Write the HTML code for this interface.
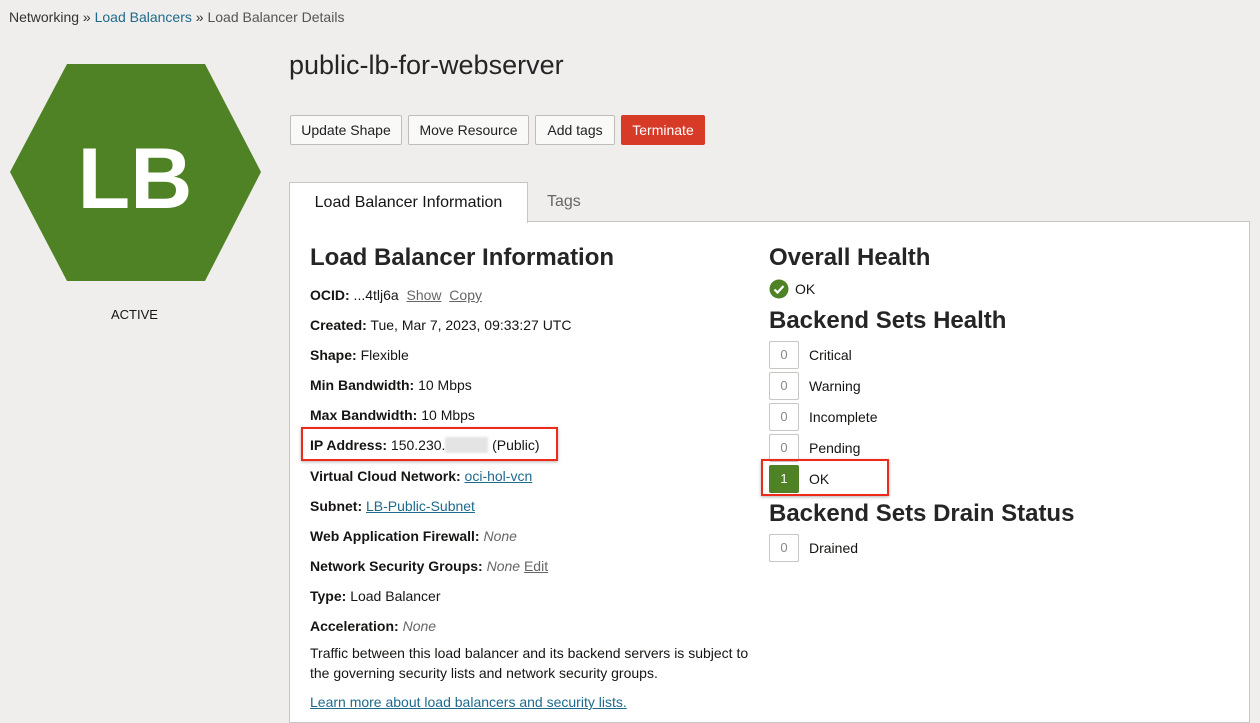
<!DOCTYPE html>
<html><head><meta charset="utf-8"><style>
body{margin:0;width:1260px;height:717px;overflow:hidden;background:#f0eeec;font-family:"Liberation Sans",sans-serif;color:#161513;position:relative}
.a{position:absolute;white-space:nowrap}
.crumb{left:9px;top:9px;font-size:14px;color:#333}
.crumb a{color:#1e6a8d;text-decoration:none}
.crumb .g{color:#555}
h1{position:absolute;left:289px;top:50px;margin:0;font-size:27px;font-weight:normal;color:#252525}
.btn{position:absolute;top:115px;height:28px;line-height:28px;border:1px solid #c0bdb8;background:#f9f9f8;border-radius:2px;font-size:14px;text-align:center;color:#222}
.panel{position:absolute;left:289px;top:221px;width:959px;height:500px;background:#fff;border:1px solid #c8c6c2}
.tab{position:absolute;left:289px;top:182px;width:237px;height:40px;background:#fff;border:1px solid #c8c6c2;border-bottom:none;font-size:16px;line-height:40px;text-align:center;z-index:2}
.tab2{left:547px;top:193px;font-size:16px;color:#666}
.h2{font-size:24px;font-weight:bold;color:#252525}
.r{font-size:14px;left:310px}
.r b{font-weight:bold}
.r i{color:#666}
.lnk{color:#1e6a8d;text-decoration:underline}
.gl{color:#666;text-decoration:underline}
.bx{position:absolute;left:769px;width:28px;height:26px;border:1px solid #c8c6c2;border-radius:2px;text-align:center;line-height:26px;font-size:13px;color:#888;background:#fff}
.lb{left:809px;font-size:14px}
.red{position:absolute;border:2px solid #ee2a1b;box-shadow:0 1px 3px rgba(0,0,0,.3)}
</style></head><body>
<div class="a crumb">Networking » <a>Load Balancers</a> » <span class="g">Load Balancer Details</span></div>
<svg class="a" style="left:0;top:60px" width="270" height="225"><polygon points="10,112 67,4 205,4 261,112 205,221 67,221" fill="#4e8225"/><text x="135" y="148" text-anchor="middle" font-family="Liberation Sans" font-weight="bold" font-size="86" fill="#fff">LB</text></svg>
<div class="a" style="left:111px;top:307px;font-size:13px">ACTIVE</div>
<h1>public-lb-for-webserver</h1>
<div class="btn" style="left:290px;width:110px">Update Shape</div>
<div class="btn" style="left:408px;width:119px">Move Resource</div>
<div class="btn" style="left:535px;width:78px">Add tags</div>
<div class="btn" style="left:621px;width:82px;background:#d73b27;border-color:#d73b27;color:#fff">Terminate</div>
<div class="panel"></div>
<div class="tab">Load Balancer Information</div>
<div class="a tab2">Tags</div>
<div class="a h2" style="left:310px;top:244px">Load Balancer Information</div>
<div class="a r" style="top:287px"><b>OCID:</b> ...4tlj6a &nbsp;<span class="gl">Show</span> &nbsp;<span class="gl">Copy</span></div>
<div class="a r" style="top:317px"><b>Created:</b> Tue, Mar 7, 2023, 09:33:27 UTC</div>
<div class="a r" style="top:347px"><b>Shape:</b> Flexible</div>
<div class="a r" style="top:377px"><b>Min Bandwidth:</b> 10 Mbps</div>
<div class="a r" style="top:407px"><b>Max Bandwidth:</b> 10 Mbps</div>
<div class="a r" style="top:437px"><b>IP Address:</b> 150.230.<span style="color:#ccc;background:#e4e4e4;filter:blur(1px)">&nbsp;&nbsp;&nbsp;&nbsp;&nbsp;&nbsp;&nbsp;&nbsp;&nbsp;&nbsp;&nbsp;</span> (Public)</div>
<div class="a r" style="top:468px"><b>Virtual Cloud Network:</b> <span class="lnk">oci-hol-vcn</span></div>
<div class="a r" style="top:498px"><b>Subnet:</b> <span class="lnk">LB-Public-Subnet</span></div>
<div class="a r" style="top:528px"><b>Web Application Firewall:</b> <i>None</i></div>
<div class="a r" style="top:558px"><b>Network Security Groups:</b> <i>None</i> <span class="gl">Edit</span></div>
<div class="a r" style="top:588px"><b>Type:</b> Load Balancer</div>
<div class="a r" style="top:618px"><b>Acceleration:</b> <i>None</i></div>
<div class="a r" style="top:643px;line-height:20px">Traffic between this load balancer and its backend servers is subject to<br>the governing security lists and network security groups.</div>
<div class="a r" style="top:694px"><span class="lnk">Learn more about load balancers and security lists.</span></div>
<div class="red" style="left:301px;top:427px;width:253px;height:30px"></div>

<div class="a h2" style="left:769px;top:244px">Overall Health</div>
<svg class="a" style="left:769px;top:279px" width="20" height="20"><circle cx="10" cy="10" r="9.5" fill="#4e8225"/><path d="M5.5 10.5l3 3 6-6.5" stroke="#fff" stroke-width="2.2" fill="none"/></svg>
<div class="a" style="left:795px;top:281px;font-size:14px">OK</div>
<div class="a h2" style="left:769px;top:307px">Backend Sets Health</div>
<div class="bx" style="top:341px">0</div><div class="a lb" style="top:347px">Critical</div>
<div class="bx" style="top:372px">0</div><div class="a lb" style="top:378px">Warning</div>
<div class="bx" style="top:403px">0</div><div class="a lb" style="top:409px">Incomplete</div>
<div class="bx" style="top:434px">0</div><div class="a lb" style="top:440px">Pending</div>
<div class="bx" style="top:465px;background:#4e8225;border-color:#4e8225;color:#fff">1</div><div class="a lb" style="top:471px">OK</div>
<div class="red" style="left:761px;top:459px;width:124px;height:33px"></div>
<div class="a h2" style="left:769px;top:500px">Backend Sets Drain Status</div>
<div class="bx" style="top:534px">0</div><div class="a lb" style="top:540px">Drained</div>
</body></html>
